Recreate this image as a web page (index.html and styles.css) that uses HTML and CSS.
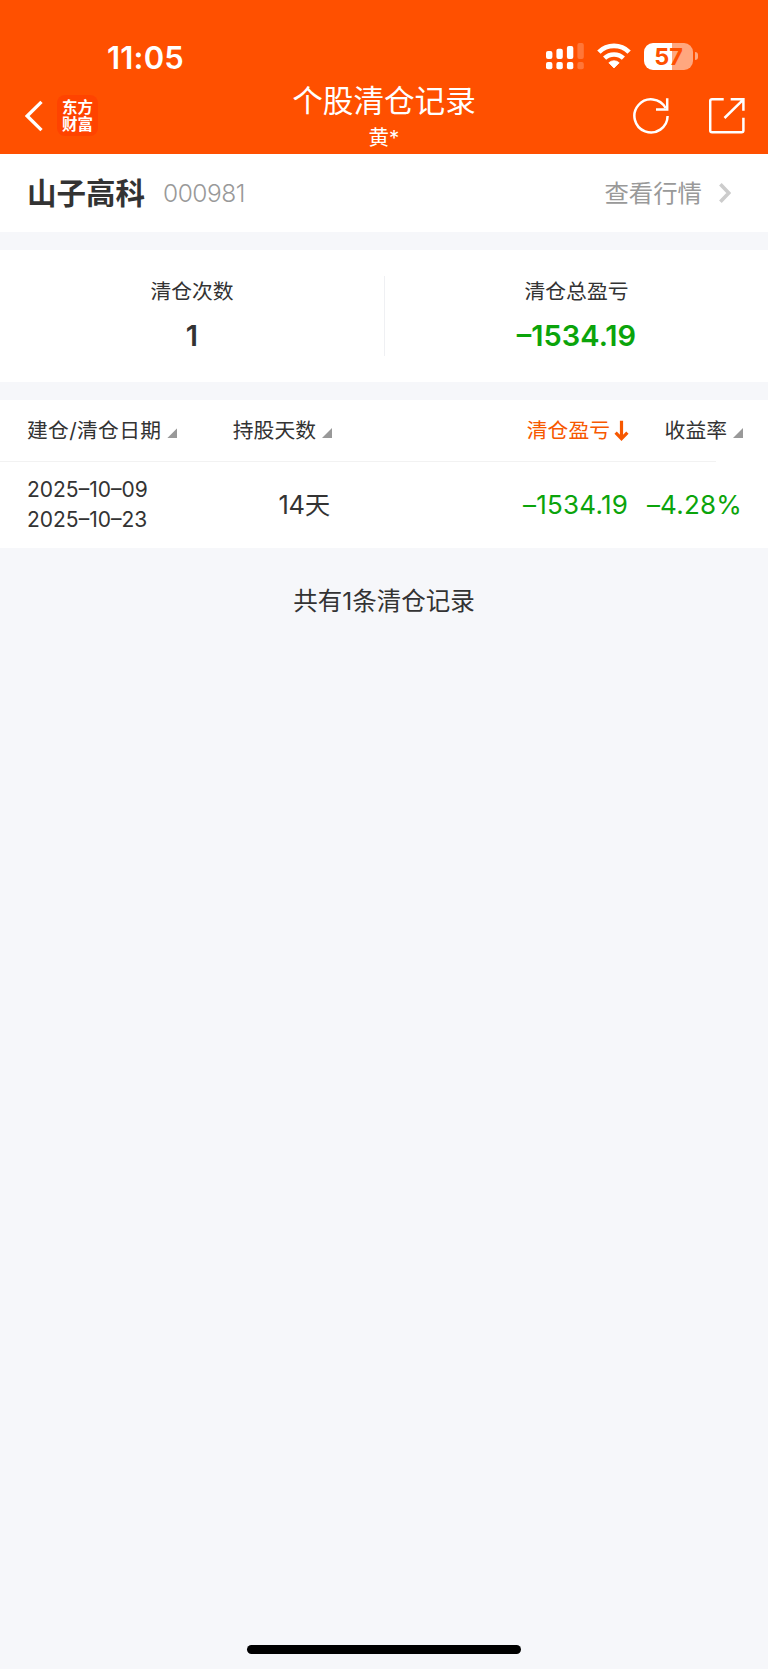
FILE: index.html
```html
<!DOCTYPE html>
<html lang="zh-CN">
<head>
<meta charset="utf-8">
<title>个股清仓记录</title>
<link rel="stylesheet" href="styles.css">
</head>
<body>
<header class="top">
  <div class="status">
    <span class="clock">11:05</span>
    <div class="status-icons">
      <svg class="signal" width="39" height="28" viewBox="0 0 39 28" fill="#fff">
        <rect x="0" y="9" width="6.4" height="8" rx="2"/><rect x="0" y="20" width="6.4" height="7.2" rx="2"/>
        <rect x="10.4" y="6.8" width="6.4" height="10.2" rx="2"/><rect x="10.4" y="20" width="6.4" height="7.2" rx="2"/>
        <rect x="20.9" y="4" width="6.4" height="13" rx="2"/><rect x="20.9" y="20" width="6.4" height="7.2" rx="2"/>
        <g opacity=".22"><rect x="31.4" y="1" width="6.4" height="16" rx="2"/><rect x="31.4" y="20" width="6.4" height="7.2" rx="2"/></g>
      </svg>
      <svg class="wifi" width="34" height="26" viewBox="0 0 34 26">
        <path d="M1.9 9.1a21.6 21.6 0 0 1 30.2 0" fill="none" stroke="#fff" stroke-width="4.8"/>
        <path d="M7.6 15.2a13.5 13.5 0 0 1 18.8 0" fill="none" stroke="#fff" stroke-width="4.5"/>
        <path d="M17 25l-5.2-5.2a7.6 7.6 0 0 1 10.4 0z" fill="#fff" stroke="#fff" stroke-linejoin="round" stroke-width=".8"/>
      </svg>
      <div class="battery"><span>57</span></div><i class="nub"></i>
    </div>
  </div>
  <div class="nav">
    <div class="nav-left">
      <svg width="18" height="32" viewBox="0 0 18 32"><path d="M16.5 1.8L2.2 16l14.3 14.2" fill="none" stroke="#fff" stroke-width="3.3"/></svg>
      <div class="logo">东方<br>财富</div>
    </div>
    <div class="titles"><h1>个股清仓记录</h1><p>黄*</p></div>
    <div class="nav-right">
      <svg width="37" height="38" viewBox="0 0 37 38" fill="none" stroke="#fff" stroke-width="2.5">
        <path d="M34.6 19.1A16.6 16.6 0 1 1 32.6 11"/><path d="M34.2 1.2v11.2H23"/>
      </svg>
      <svg width="37" height="38" viewBox="0 0 37 38" fill="none" stroke="#fff" stroke-width="2.5">
        <path d="M14.7 2.2H3a1.8 1.8 0 0 0-1.8 1.8v29.4A1.8 1.8 0 0 0 3 35.2h29.6a1.8 1.8 0 0 0 1.8-1.8V20.7"/>
        <path d="M21.7 2.2h12.7v11.5M34 2.8L15.5 21"/>
      </svg>
    </div>
  </div>
</header>

<section class="stock">
  <strong>山子高科</strong><span class="code">000981</span>
  <a class="quote"><span>查看行情</span>
    <svg width="12" height="22" viewBox="0 0 12 22"><path d="M1.4 2.2L9.8 11l-8.4 8.8" fill="none" stroke="#ccc" stroke-width="3.6"/></svg>
  </a>
</section>

<section class="summary">
  <div class="stat"><span class="label">清仓次数</span><b>1</b></div>
  <div class="stat"><span class="label">清仓总盈亏</span><b class="down">–1534.19</b></div>
</section>

<section class="records">
  <div class="grid head">
    <span class="first">建仓/清仓日期<i class="tri"></i></span>
    <span>持股天数<i class="tri"></i></span>
    <span class="active">清仓盈亏<svg width="15" height="21" viewBox="0 0 15 21"><path d="M7.5.8v17M1.6 12.6l5.9 6 5.9-6" fill="none" stroke="#f75800" stroke-width="3.2"/></svg></span>
    <span>收益率<i class="tri"></i></span>
  </div>
  <div class="grid row">
    <div class="dates">2025–10–09<br>2025–10–23</div>
    <span class="days">14天</span>
    <span class="down profit">–1534.19</span>
    <span class="down rate">–4.28%</span>
  </div>
</section>

<p class="total">共有1条清仓记录</p>
<div class="home"></div>
</body>
</html>
```
FILE: styles.css
```css
* { box-sizing: border-box; margin: 0; padding: 0; }
body {
  display: flex;
  flex-direction: column;
  width: 768px;
  height: 1669px;
  background: #f6f7fa;
  color: #333;
  font-family: Inter, "Noto Sans CJK SC", sans-serif;
  font-weight: 400;
}
svg { display: block; flex: none; }

.top { height: 154px; background: #ff5000; color: #fff; }
.status { display: flex; justify-content: space-between; height: 78px; padding: 37px 70px 0 107px; }
.clock { font-size: 31px; line-height: 41px; font-weight: 600; letter-spacing: .2px; }
.status-icons { display: flex; align-items: flex-start; padding-top: 5px; }
.wifi { margin: 1px 13px 0 12px; }
.battery {
  width: 49px;
  height: 27px;
  margin-top: 1px;
  border-radius: 9px;
  background: linear-gradient(90deg, #fff 28px, #ffa77f 28px);
  color: #ff5000;
  font-size: 23.5px;
  font-weight: 700;
  line-height: 28px;
  text-align: center;
}
.nub { width: 3px; height: 8px; margin: 10px 0 0 2px; border-radius: 0 4px 4px 0; background: #ffa77f; }

.nav { display: grid; grid-template-columns: 1fr auto 1fr; height: 76px; padding: 0 22px 0 25px; }
.nav-left { display: flex; align-items: center; gap: 14px; height: 75px; }
.logo {
  width: 41px;
  height: 41px;
  padding-top: 4px;
  border-radius: 8px;
  background: #ff4300;
  font-size: 15.5px;
  font-weight: 700;
  line-height: 17px;
  text-align: center;
}
.titles { padding: 3px 3px 0 0; text-align: center; }
.titles h1 { font-size: 30.6px; font-weight: 400; line-height: 40px; }
.titles p { font-size: 20.5px; line-height: 24px; margin-top: 5px; }
.nav-right { display: flex; justify-content: flex-end; gap: 39px; padding-top: 19px; }

.stock { display: flex; align-items: center; height: 78px; padding: 0 37px 0 27px; background: #fff; }
.stock strong { font-size: 29.5px; font-weight: 700; line-height: 40px; }
.code { margin-left: 18px; color: #999; font-size: 24.5px; font-weight: 300; letter-spacing: -.5px; }
.quote { display: flex; align-items: center; gap: 17px; margin-left: auto; color: #999; font-size: 24.4px; line-height: 34px; }

.summary { display: grid; grid-template-columns: 1fr 1fr; height: 132px; margin: 18px 0; padding: 26px 0; background: #fff; }
.stat { display: flex; flex-direction: column; align-items: center; height: 80px; }
.stat + .stat { border-left: 1px solid #eff0f3; }
.label { font-size: 20.8px; line-height: 32px; }
.stat b { margin-top: 8px; font-size: 29px; font-weight: 600; line-height: 40px; }
.down { color: #0ba40b; }

.records { height: 148px; background: #fff; }
.grid { display: grid; grid-template-columns: 205px 100px 297px 114px; padding-left: 27px; align-items: center; justify-items: end; }
.head { height: 61px; font-size: 20.8px; line-height: 61px; }
.head span { display: flex; align-items: center; white-space: nowrap; }
.head .first, .dates { justify-self: start; }
.first { letter-spacing: .3px; }
.active { color: #f75800; gap: 4px; }
.tri { width: 10px; height: 10px; margin: 5px 0 0 6px; background: #999; clip-path: polygon(100% 0, 100% 100%, 0 100%); }
.row { height: 87px; grid-template-rows: 1px 86px; }
.row::before { content: ""; grid-column: 1 / -1; width: 716px; height: 1px; margin-left: -27px; justify-self: start; align-self: start; background: #f2f2f2; }
.dates { font-size: 21px; line-height: 30px; }
.days, .profit, .rate { font-size: 26px; line-height: 34px; white-space: nowrap; letter-spacing: .2px; }
.days { padding-right: 2px; font-size: 25.5px; letter-spacing: -.3px; }
.profit, .rate { padding-right: 1px; }

.total { margin-top: 34px; font-size: 24.5px; line-height: 38px; text-align: center; }
.home { width: 274px; height: 9px; margin: auto auto 15px; border-radius: 5px; background: #000; }
```
